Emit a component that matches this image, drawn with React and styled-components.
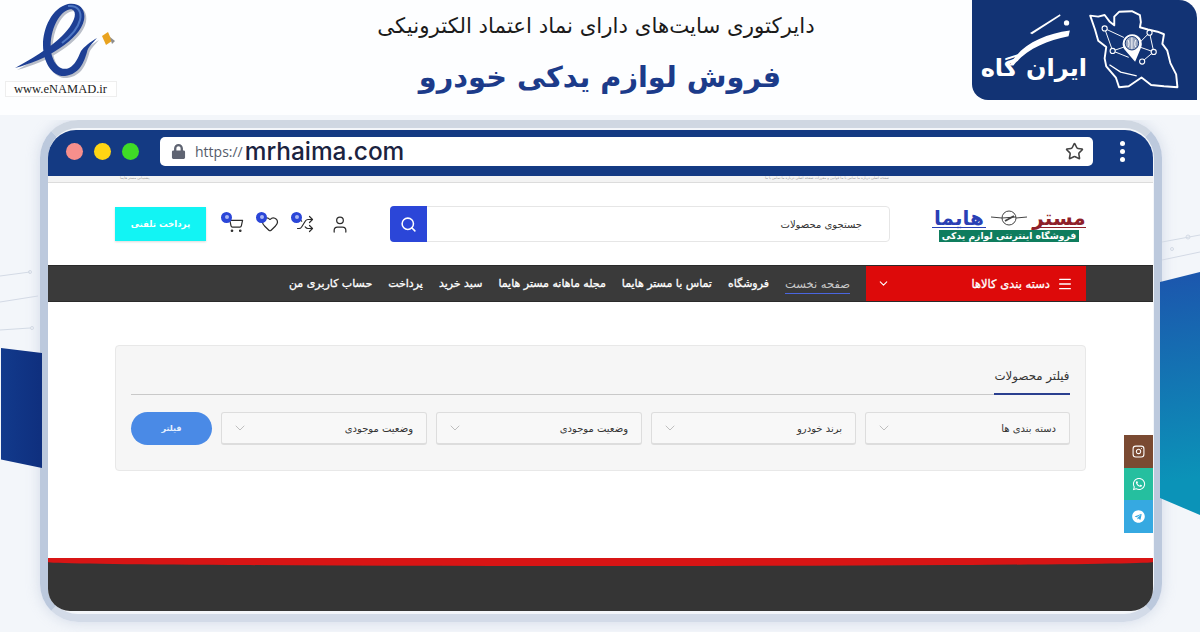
import React from "react";
import styled, { createGlobalStyle } from "styled-components";
import { User, Shuffle, Heart, ShoppingCart, Search, Menu, ChevronDown, Star, Instagram } from "lucide-react";
import { FaLock, FaWhatsapp, FaTelegram } from "react-icons/fa";

const FA = `"DejaVu Sans", "Noto Sans", sans-serif`;

const navItems = ["صفحه نخست", "فروشگاه", "تماس با مستر هایما", "مجله ماهانه مستر هایما", "سبد خرید", "پرداخت", "حساب کاربری من"];
const filters = [
    { label: "دسته بندی ها", grow: 205 },
    { label: "برند خودرو", grow: 205 },
    { label: "وضعیت موجودی", grow: 206 },
    { label: "وضعیت موجودی", grow: 206 },
];

const RIBBON = "M13 68C28 60 48 48 60 36C70 26 75 16 72 11C69 7 62 10 56 19C49 30 47 46 50 56C53 66 60 71 67 68C73 65 76 58 79 51C82 47 88 42 95 38C90 44 86 47 85 52C82 62 78 74 63 76C50 77 41 62 41 45C41 28 50 8 66 4C78 2 84 10 82 20C80 30 70 40 58 48C44 58 28 64 13 68Z";

export default function App() {
    return (
        <Page>
            <GlobalStyle />
            <SideBlue />
            <SideTeal />
            <DotsRight width="38" height="32" viewBox="0 0 38 32" fill="none" stroke="#d3dae5">
                <path d="M0 10L38 3M0 28L38 20" />
                <circle cx="26" cy="5" r="2" />
                <circle cx="10" cy="17" r="1.5" />
            </DotsRight>
            <DotsLeft width="38" height="64" viewBox="0 0 38 64" fill="none" stroke="#d3dae5">
                <path d="M0 8L30 4M0 34L38 28M0 62L30 60" />
                <circle cx="30" cy="4" r="1.5" />
                <circle cx="32" cy="60" r="1.5" />
            </DotsLeft>
            <Header>
                <ENamad>
                    <svg width="112" height="80" viewBox="3 3 112 80">
                        <path d={RIBBON} fill="#b9bec9" transform="translate(2 2)" />
                        <path d={RIBBON} fill="#1d3f94" />
                        <path d="M66 6C76 5 80 12 78 20C76 28 68 37 60 43" fill="none" stroke="#4f78c4" strokeWidth="2" />
                        <path d="M100 36L106 32L110 41L104 45Z" fill="#e9a320" />
                        <path d="M108 37L113 41L110 44Z" fill="#8d8d8d" />
                    </svg>
                    <ENamadLabel>www.eNAMAD.ir</ENamadLabel>
                </ENamad>
                <Titles>
                    <SubTitle>دایرکتوری سایت‌های دارای نماد اعتماد الکترونیکی</SubTitle>
                    <MainTitle>فروش لوازم یدکی خودرو</MainTitle>
                </Titles>
                <Badge>
                    <BadgeMark>
                        <svg width="104" height="83" viewBox="40 20 310 250" fill="#fff">
                            <path d="M118 190C150 130 220 95 300 85L296 102C230 115 170 140 130 190Z" />
                            <path d="M180 92L270 36L272 40L186 96Z" />
                            <circle cx="290" cy="62" r="8" />
                        </svg>
                        <BadgeWord>ایران گاه</BadgeWord>
                    </BadgeMark>
                    <svg width="97" height="85" viewBox="340 20 290 255" fill="none" stroke="#fff" strokeWidth="6" strokeLinejoin="round">
                        <path d="M350 42L375 45L395 40L410 60L425 72L425 45L440 30L480 28L505 40L508 62L505 78L530 85L560 92L580 100L575 130L590 150L600 190L618 225L622 265L580 262L540 258L510 235L470 262L440 265L430 235L400 200L395 175L400 140L375 120L365 85Z" />
                        <path d="M410 195L445 218L495 230" strokeWidth="4" />
                        <path d="M395 82L455 110M535 95L505 125M420 152L455 140M548 155L505 140M512 185L548 155M420 152L395 82M535 95L548 155M420 152L470 172" strokeWidth="3" />
                        <g fill="#123374" strokeWidth="3.5">
                            <circle cx="395" cy="82" r="8" />
                            <circle cx="535" cy="95" r="8" />
                            <circle cx="420" cy="152" r="8" />
                            <circle cx="548" cy="155" r="8" />
                            <circle cx="512" cy="185" r="8" />
                        </g>
                        <path d="M490 186L455 145A30 30 0 1 1 507 145Z" fill="#fff" stroke="none" />
                        <circle cx="480" cy="128" r="21" fill="#9aa6bf" stroke="#123374" strokeWidth="3" />
                        <path d="M480 110V146M468 118C472 126 472 134 468 140M492 118C488 126 488 134 492 140" stroke="#fff" strokeWidth="3" />
                    </svg>
                </Badge>
            </Header>
            <Frame>
                <Screen>
                    <BrowserBar>
                        <Lights>
                            <Light $color="#f78f8c" />
                            <Light $color="#ffd514" />
                            <Light $color="#3fdc27" />
                        </Lights>
                        <UrlBar>
                            <FaLock size={15} color="#5f6472" />
                            <Protocol>https://</Protocol>
                            <Domain>mrhaima.com</Domain>
                            <StarWrap><Star size={19} color="#444" strokeWidth={2} /></StarWrap>
                        </UrlBar>
                        <Kebab><i /><i /><i /></Kebab>
                    </BrowserBar>
                    <Site dir="rtl">
                        <TopStrip>
                            <span>صفحه اصلی درباره ما تماس با ما قوانین و مقررات صفحه اصلی درباره ما تماس با ما</span>
                            <span>پشتیبانی مستر هایما</span>
                        </TopStrip>
                        <SiteHead>
                            <Logo>
                                <LogoTop>
                                    <LogoWord $color="#8f1f2a">مستر</LogoWord>
                                    <svg width="36" height="18" viewBox="0 0 36 18" fill="none" stroke="#444" strokeWidth="1">
                                        <circle cx="18" cy="9" r="7" />
                                        <path d="M0 8L11 9M25 9L36 8M11 9L25 8" />
                                        <path d="M14 12L23 7" strokeWidth="1.8" />
                                    </svg>
                                    <LogoWord $color="#2a3fb5">هایما</LogoWord>
                                </LogoTop>
                                <LogoStrip>فروشگاه اینترنتی لوازم یدکی</LogoStrip>
                            </Logo>
                            <SearchBox>
                                <SearchText>جستجوی محصولات</SearchText>
                                <SearchButton><Search size={17} color="#fff" strokeWidth={2.2} /></SearchButton>
                            </SearchBox>
                            <Icons>
                                <IconCell><User size={21} strokeWidth={1.5} /></IconCell>
                                <IconCell><Shuffle size={18} strokeWidth={1.6} /><Dot /></IconCell>
                                <IconCell><Heart size={18} strokeWidth={1.6} /><Dot /></IconCell>
                                <IconCell><ShoppingCart size={18} strokeWidth={1.6} /><Dot /></IconCell>
                            </Icons>
                            <PayButton>پرداخت تلفنی</PayButton>
                        </SiteHead>
                        <Nav>
                            <NavInner>
                                <Categories>
                                    <Menu size={16} strokeWidth={2} />
                                    <span>دسته بندی کالاها</span>
                                    <CatChevron><ChevronDown size={13} strokeWidth={2} /></CatChevron>
                                </Categories>
                                <NavList>
                                    {navItems.map((item, index) => (
                                        <NavItem key={index} $active={index === 0}>{item}</NavItem>
                                    ))}
                                </NavList>
                            </NavInner>
                        </Nav>
                        <Main>
                            <FilterCard>
                                <FilterHead><FilterTitle>فیلتر محصولات</FilterTitle></FilterHead>
                                <FilterRow>
                                    {filters.map((f, index) => (
                                        <Select key={index} $grow={f.grow}>
                                            <span>{f.label}</span>
                                            <ChevronDown size={16} color="#aaa" strokeWidth={1.1} />
                                        </Select>
                                    ))}
                                    <FilterButton>فیلتر</FilterButton>
                                </FilterRow>
                            </FilterCard>
                        </Main>
                        <Footer />
                        <Social>
                            <SocialItem $color="#7a4a32"><Instagram size={13} /></SocialItem>
                            <SocialItem $color="#25bf9f"><FaWhatsapp size={14} /></SocialItem>
                            <SocialItem $color="#36a9e1"><FaTelegram size={13} /></SocialItem>
                        </Social>
                    </Site>
                </Screen>
            </Frame>
        </Page>
    );
}

const GlobalStyle = createGlobalStyle`
    html, body { margin: 0; padding: 0; background: #f3f6fa; }
    * { box-sizing: border-box; }
`;

const Page = styled.div`
    position: relative;
    width: 1200px;
    height: 632px;
    overflow: hidden;
    background: #f3f6fa;
    font-family: ${FA};
`;

const SideBlue = styled.div`
    position: absolute;
    left: 1px;
    top: 348px;
    width: 41px;
    height: 120px;
    background: linear-gradient(90deg, #123a8c, #0f2f7e);
    clip-path: polygon(0 0, 100% 5px, 100% 100%, 0 93%);
`;

const SideTeal = styled.div`
    position: absolute;
    right: 0;
    top: 272px;
    width: 40px;
    height: 243px;
    background: linear-gradient(172deg, #1c55ad, #0b93b8 85%);
    clip-path: polygon(0 10px, 100% 0, 100% 100%, 0 93%);
`;

const DotsRight = styled.svg`
    position: absolute;
    right: 0;
    top: 232px;
`;

const DotsLeft = styled.svg`
    position: absolute;
    left: 0;
    top: 268px;
`;

const Header = styled.header`
    position: relative;
    height: 120px;
    padding-bottom: 4px;
    background: linear-gradient(#fdfeff 0 115px, #f3f6fa 115px);
    display: flex;
    align-items: flex-start;
`;

const ENamad = styled.div`
    width: 118px;
    padding: 3px 0 0 3px;
    display: flex;
    flex-direction: column;
    align-items: center;
`;

const ENamadLabel = styled.div`
    width: 112px;
    height: 16px;
    margin-top: -2px;
    background: #fff;
    border: 1px solid #eee;
    font: 12.5px/14px "Liberation Serif", serif;
    color: #222;
    text-align: center;
    white-space: nowrap;
`;

const Titles = styled.div`
    flex: 1;
    padding-left: 102px;
    padding-top: 11px;
    display: flex;
    flex-direction: column;
    align-items: center;
    direction: rtl;
`;

const SubTitle = styled.div`
    font-size: 21.3px;
    line-height: 30px;
    color: #1b1b1b;
    white-space: nowrap;
`;

const MainTitle = styled.div`
    margin-top: 13px;
    padding-left: 8px;
    font-size: 28.8px;
    line-height: 46px;
    font-weight: 700;
    color: #1c3b8a;
    white-space: nowrap;
`;

const Badge = styled.div`
    width: 225px;
    height: 100px;
    margin-right: 3px;
    padding: 7px 17px 0 11px;
    background: #123374;
    border-radius: 0 18px 0 16px;
    display: flex;
    align-items: flex-start;
    justify-content: space-between;
    overflow: hidden;
`;

const BadgeMark = styled.div`
    position: relative;
    width: 104px;
    height: 85px;
    svg {
        position: absolute;
        left: 0;
        top: 2px;
    }
`;

const BadgeWord = styled.div`
    direction: rtl;
    padding-top: 43px;
    font-size: 24px;
    line-height: 36px;
    font-weight: 700;
    color: #fff;
    text-align: center;
    white-space: nowrap;
`;

const Frame = styled.div`
    width: 1122px;
    height: 502px;
    margin-left: 40px;
    padding: 2px 1px 3px 0;
    border: 8px solid #bcc9dd;
    border-top-color: #cfd7e2;
    border-bottom-color: #d3dbe8;
    border-radius: 38px;
    box-shadow: 0 0 14px rgba(170, 185, 210, 0.45);
`;

const Screen = styled.div`
    height: 100%;
    border-radius: 28px 28px 22px 22px;
    overflow: hidden;
    display: flex;
    flex-direction: column;
    background: #fff;
`;

const BrowserBar = styled.div`
    height: 46px;
    flex: none;
    padding: 7px 0 10px 0;
    background: #143a83;
    display: flex;
    align-items: center;
`;

const Lights = styled.div`
    width: 112px;
    padding-left: 18px;
    display: flex;
    gap: 11px;
`;

const Light = styled.span`
    width: 17px;
    height: 17px;
    border-radius: 50%;
    background: ${(p) => p.$color};
`;

const UrlBar = styled.div`
    width: 933px;
    height: 29px;
    padding: 0 9px 0 11px;
    border-radius: 5px;
    background: #fff;
    display: flex;
    align-items: center;
    font-family: "Open Sans", sans-serif;
`;

const Protocol = styled.span`
    margin-left: 9px;
    font-size: 14px;
    color: #555c6b;
`;

const Domain = styled.span`
    margin-left: 2px;
    margin-top: -2px;
    font-size: 24.4px;
    font-weight: 500;
    color: #1b2340;
    font-family: Inter, sans-serif;
`;

const StarWrap = styled.span`
    margin-left: auto;
    display: flex;
`;

const Kebab = styled.div`
    flex: 1;
    padding-right: 2px;
    display: flex;
    flex-direction: column;
    align-items: center;
    gap: 3px;
    i {
        width: 5px;
        height: 5px;
        border-radius: 50%;
        background: #fff;
    }
`;

const Site = styled.div`
    position: relative;
    flex: 1;
    display: flex;
    flex-direction: column;
    min-height: 0;
`;

const TopStrip = styled.div`
    height: 7px;
    flex: none;
    padding: 0 264px 0 0;
    display: flex;
    justify-content: space-between;
    background: #f3f3f3;
    border-bottom: 1px solid #dcdcdc;
    font-size: 3.5px;
    line-height: 4px;
    color: #999;
    white-space: nowrap;
    span + span { padding-left: 72px; }
`;

const SiteHead = styled.div`
    height: 82px;
    flex: none;
    padding: 0 67px;
    display: flex;
    align-items: center;
`;

const Logo = styled.div`
    width: 154px;
    display: flex;
    flex-direction: column;
    align-items: center;
`;

const LogoTop = styled.div`
    width: 100%;
    height: 24px;
    display: flex;
    align-items: center;
    justify-content: space-between;
`;

const LogoWord = styled.span`
    width: 54px;
    height: 19px;
    border-bottom: 1px solid ${(p) => p.$color};
    font-size: 20px;
    line-height: 18px;
    font-weight: 700;
    text-align: center;
    color: ${(p) => p.$color};
`;

const LogoStrip = styled.div`
    width: 140px;
    height: 12px;
    background: #0f7d5e;
    color: #fff;
    font-size: 9.2px;
    line-height: 12px;
    font-weight: 700;
    text-align: center;
    white-space: nowrap;
`;

const SearchBox = styled.div`
    width: 500px;
    height: 36px;
    margin-right: 42px;
    background: #fff;
    border: 1px solid #e6e6e6;
    border-radius: 4px;
    display: flex;
    align-items: center;
    justify-content: space-between;
`;

const SearchText = styled.span`
    padding-right: 27px;
    font-size: 10px;
    color: #333;
`;

const SearchButton = styled.span`
    width: 37px;
    height: 36px;
    margin-left: -1px;
    background: #2b46d8;
    border-radius: 4px 0 0 4px;
    display: flex;
    align-items: center;
    justify-content: center;
`;

const Icons = styled.div`
    margin-right: 40px;
    display: flex;
    gap: 15px;
    color: #2c2c2c;
`;

const IconCell = styled.span`
    position: relative;
    width: 20px;
    height: 22px;
    display: flex;
    align-items: center;
    justify-content: center;
`;

const Dot = styled.i`
    position: absolute;
    top: -1px;
    right: 13px;
    width: 11px;
    height: 11px;
    border-radius: 50%;
    background: #2b46d8;
    border: 3.5px solid #2b46d8;
    &::after {
        content: "";
        display: block;
        width: 4px;
        height: 4px;
        border-radius: 50%;
        background: #a9b6f2;
    }
`;

const PayButton = styled.div`
    width: 91px;
    height: 34px;
    margin-right: auto;
    background: #12f4f4;
    color: #fff;
    font-size: 8.6px;
    line-height: 34px;
    font-weight: 700;
    text-align: center;
    white-space: nowrap;
    box-shadow: 0 1px 2px rgba(0, 0, 0, 0.15);
`;

const Nav = styled.nav`
    height: 37px;
    flex: none;
    padding: 0 67px;
    background: #3a3a3a;
    border-top: 1px solid #2a2a2a;
    border-bottom: 1px solid #2a2a2a;
`;

const NavInner = styled.div`
    height: 100%;
    display: flex;
    align-items: stretch;
`;

const Categories = styled.div`
    width: 220px;
    padding: 0 13px 0 0;
    background: #dd0a0a;
    color: #fff;
    display: flex;
    align-items: center;
    gap: 7px;
    font-size: 11.5px;
    -webkit-text-stroke: 0.3px #fff;
    white-space: nowrap;
`;

const CatChevron = styled.span`
    margin-right: auto;
    margin-left: 11px;
    display: flex;
`;

const NavList = styled.div`
    padding-right: 16px;
    display: flex;
    align-items: center;
    gap: 16px;
`;

const NavItem = styled.span`
    padding: 3px 0 2px;
    font-size: ${(p) => (p.$active ? 11.5 : 11)}px;
    line-height: 14px;
    color: ${(p) => (p.$active ? "#c9c9c9" : "#fff")};
    -webkit-text-stroke: ${(p) => (p.$active ? "0" : "0.3px #fff")};
    border-bottom: 1px solid ${(p) => (p.$active ? "#4a66e0" : "transparent")};
    white-space: nowrap;
`;

const Main = styled.main`
    flex: 1;
    padding: 43px 67px 0;
`;

const FilterCard = styled.section`
    height: 126px;
    padding: 15px 15px 0;
    background: #f6f6f6;
    border: 1px solid #e8e8e8;
    border-radius: 4px;
`;

const FilterHead = styled.div`
    height: 34px;
    border-bottom: 1px solid #c9c9c9;
    display: flex;
`;

const FilterTitle = styled.div`
    height: 34px;
    width: 76px;
    border-bottom: 2px solid #2a3f8f;
    font-size: 11.8px;
    line-height: 30px;
    color: #333;
    white-space: nowrap;
    text-align: center;
`;

const FilterRow = styled.div`
    margin-top: 17px;
    display: flex;
    gap: 9px;
`;

const Select = styled.div`
    flex: 0 0 ${(p) => p.$grow}px;
    height: 33px;
    padding: 0 13px 0 10px;
    background: #f8f8f8;
    border: 1px solid #ddd;
    border-bottom-width: 2px;
    border-radius: 3px;
    display: flex;
    align-items: center;
    justify-content: space-between;
    font-size: 10px;
    color: #333;
`;

const FilterButton = styled.div`
    flex: 1;
    height: 33px;
    border-radius: 17px;
    background: #4a8ae6;
    color: #eaf2ff;
    font-size: 8px;
    line-height: 33px;
    font-weight: 700;
    text-align: center;
`;

const Footer = styled.footer`
    height: 53px;
    flex: none;
    background: #353535;
    border-top: 4px solid #d81515;
    &::before {
        content: "";
        display: block;
        height: 4px;
        background: #d81515;
        border-radius: 0 0 50% 50% / 0 0 100% 100%;
    }
`;

const Social = styled.div`
    position: absolute;
    right: 0;
    top: 259px;
    width: 29px;
    display: flex;
    flex-direction: column;
`;

const SocialItem = styled.span`
    height: 32.7px;
    background: ${(p) => p.$color};
    color: #fff;
    display: flex;
    align-items: center;
    justify-content: center;
`;
